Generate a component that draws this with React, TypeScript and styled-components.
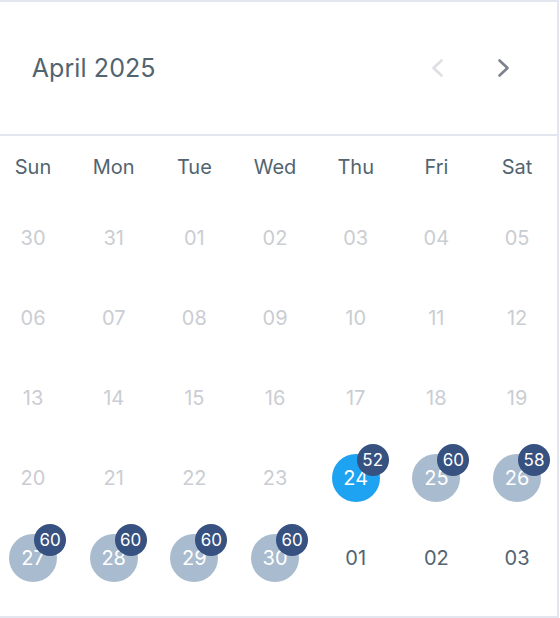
import styled, { createGlobalStyle } from "styled-components";

type DayState = "disabled" | "selected" | "available" | "normal";

type DayType = {
  label: string;
  state: DayState;
  count?: number;
};

const GlobalStyle = createGlobalStyle`
  html, body {
    margin: 0;
    padding: 0;
    background: #fff;
    overflow: hidden;
  }
  body {
    font-family: Inter, "Noto Sans", sans-serif;
  }
`;

const weekdays = ["Sun", "Mon", "Tue", "Wed", "Thu", "Fri", "Sat"];

const counts: Record<string, number> = {
  "24": 52,
  "25": 60,
  "26": 58,
  "27": 60,
  "28": 60,
  "29": 60,
  "30": 60,
};

// 3월 말 + 4월 + 5월 초
const buildDays = (): DayType[] => {
  const list: DayType[] = [
    { label: "30", state: "disabled" },
    { label: "31", state: "disabled" },
  ];
  for (let d = 1; d <= 30; d++) {
    const label = String(d).padStart(2, "0");
    let state: DayState = "disabled";
    if (d === 24) state = "selected";
    else if (d > 24) state = "available";
    list.push({ label, state, count: counts[label] });
  }
  ["01", "02", "03"].forEach((label) => list.push({ label, state: "normal" }));
  return list;
};

const days = buildDays();

const Calendar = styled.div`
  width: 568.7px;
  margin-left: -9.3px;
  border: 2px solid #e4e6ef;
  box-sizing: border-box;
  background: #fff;
  padding-bottom: 18px;
`;

const Header = styled.div`
  height: 132px;
  display: flex;
  align-items: center;
  justify-content: space-between;
  padding: 0 46px 0 39px;
  border-bottom: 2px solid #e4e6ef;
`;

const Title = styled.h2`
  margin: 0;
  font-size: 25px;
  font-weight: 400;
  color: #51646f;
  letter-spacing: 0.1px;
`;

const Nav = styled.div`
  display: flex;
  align-items: center;
  gap: 53px;
`;

const NavButton = styled.button<{ $disabled?: boolean }>`
  border: none;
  background: none;
  padding: 0;
  width: 14px;
  height: 20px;
  display: flex;
  color: ${({ $disabled }) => ($disabled ? "#dcdee2" : "#7b808d")};
  cursor: pointer;
`;

const Grid = styled.div`
  display: grid;
  grid-template-columns: repeat(7, 1fr);
`;

const Weekday = styled.div`
  height: 62px;
  display: flex;
  align-items: center;
  justify-content: center;
  font-size: 20px;
  color: #51646f;
`;

const Cell = styled.div`
  height: 80px;
  display: flex;
  align-items: center;
  justify-content: center;
`;

const DayCircle = styled.div<{ $state: DayState }>`
  position: relative;
  width: 48px;
  height: 48px;
  border-radius: 50%;
  display: flex;
  align-items: center;
  justify-content: center;
  font-size: 20px;
  background: ${({ $state }) =>
    $state === "selected" ? "#1ea2f2" : $state === "available" ? "#a9bbce" : "transparent"};
  color: ${({ $state }) =>
    $state === "disabled" ? "#cacdd2" : $state === "normal" ? "#51646f" : "#fff"};
`;

const Badge = styled.span`
  position: absolute;
  left: 25px;
  top: -10px;
  width: 32px;
  height: 32px;
  border-radius: 50%;
  background: #375181;
  color: #fff;
  font-size: 17px;
  font-weight: 400;
  display: flex;
  align-items: center;
  justify-content: center;
`;

const Chevron = ({ dir }: { dir: "left" | "right" }) => (
  <svg width="14" height="20" viewBox="0 0 14 20" fill="none">
    <polyline
      points={dir === "left" ? "11.5,2.5 3.5,10 11.5,17.5" : "2.5,2.5 10.5,10 2.5,17.5"}
      stroke="currentColor"
      strokeWidth="2.6"
      strokeLinecap="round"
      strokeLinejoin="round"
    />
  </svg>
);

export default function App() {
  return (
    <>
      <GlobalStyle />
      <Calendar>
        <Header>
          <Title>April 2025</Title>
          <Nav>
            <NavButton $disabled aria-label="Previous month">
              <Chevron dir="left" />
            </NavButton>
            <NavButton aria-label="Next month">
              <Chevron dir="right" />
            </NavButton>
          </Nav>
        </Header>
        <Grid>
          {weekdays.map((w) => (
            <Weekday key={w}>{w}</Weekday>
          ))}
          {days.map((day, index) => (
            <Cell key={index}>
              <DayCircle $state={day.state}>
                {day.label}
                {day.count !== undefined && <Badge>{day.count}</Badge>}
              </DayCircle>
            </Cell>
          ))}
        </Grid>
      </Calendar>
    </>
  );
}
